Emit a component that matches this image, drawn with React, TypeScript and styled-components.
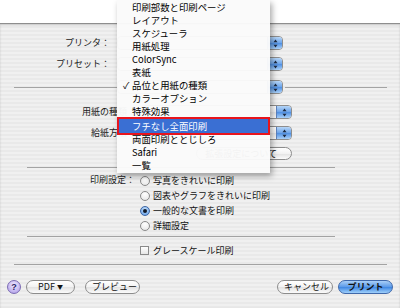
import React from 'react'
import styled, { createGlobalStyle, css } from 'styled-components'

const GlobalStyle = createGlobalStyle`
  html, body {
    margin: 0;
    padding: 0;
    background: #fff;
  }
  body {
    font-family: 'Noto Sans CJK JP', 'Noto Sans', sans-serif;
  }
`

const Screen = styled.div`
  position: relative;
  width: 400px;
  height: 308px;
  overflow: hidden;
  background: #fff;
  font-size: 9px;
  color: #111;
`

const TopGap = styled.div`
  height: 23px;
  background: #fff;
`

const Sheet = styled.div`
  height: 285px;
  box-sizing: border-box;
  border-top: 1px solid #8e8e8e;
  background: repeating-linear-gradient(to bottom, #f0f0f0 0 2px, #e9e9e9 2px 4px);
  box-shadow: inset 0 1px 2px rgba(0, 0, 0, 0.18);
  padding-top: 12px;
  display: flex;
  flex-direction: column;
`

const Body = styled.div`
  padding: 0 13px 0 14px;
`

const FormGrid = styled.div<{ $label: number; $field: number; $gap: number }>`
  display: grid;
  grid-template-columns: ${p => p.$label}px ${p => p.$field}px;
  column-gap: ${p => p.$gap}px;
  row-gap: 7px;
  align-items: center;
`

const Label = styled.div`
  text-align: right;
  line-height: 14px;
  white-space: nowrap;
  color: #1a1a1a;
`

const PopupBox = styled.div`
  display: flex;
  height: 14px;
  box-sizing: border-box;
  border: 1px solid #8d8d8d;
  border-radius: 4px;
  background: linear-gradient(#ffffff, #f1f1f1 50%, #e4e4e4 51%, #fafafa);
  overflow: hidden;
`

const PopupText = styled.span`
  flex: 1;
`

const PopupArrow = styled.span`
  width: 14px;
  display: flex;
  align-items: center;
  justify-content: center;
  border-left: 1px solid #5d82bd;
  background: linear-gradient(#b6d6f8, #6ea5ea 48%, #4f8fe2 52%, #a9d0f8);
`

// the menu hides the popup values, so only the frame and arrow are drawn
const Popup = () => (
  <PopupBox>
    <PopupText />
    <PopupArrow>
      <svg width="5" height="9" viewBox="0 0 5 9">
        <path d="M2.5 0.5 L4.5 3.3 L0.5 3.3 Z M2.5 8.5 L4.5 5.7 L0.5 5.7 Z" fill="#1d2a40" />
      </svg>
    </PopupArrow>
  </PopupBox>
)

const PaneRow = styled.div`
  margin-top: 9px;
  height: 14px;
  display: flex;
  align-items: center;
`

const Rule = styled.div<{ $width?: number; $top?: number; $grow?: boolean }>`
  height: 1px;
  background: #a3a3a3;
  ${p => p.$width && css`width: ${p.$width}px;`}
  ${p => p.$top && css`margin-top: ${p.$top}px;`}
  ${p => p.$grow && css`flex: 1;`}
`

const PaneSelect = styled.div`
  width: 166px;
  margin-right: 2px;
`

const Pane = styled.div`
  margin-top: 11px;
  padding-left: 13px;
  width: 308px;
`

const Pill = styled.button<{ $width?: number; $primary?: boolean }>`
  height: 14px;
  box-sizing: border-box;
  ${p => p.$width && css`width: ${p.$width}px;`}
  padding: 0 6px;
  border: 1px solid #8c8c8c;
  border-radius: 7px;
  background: linear-gradient(#ffffff, #f2f2f2 50%, #e2e2e2 52%, #fbfbfb);
  font-family: inherit;
  font-size: 9px;
  line-height: 12px;
  color: #111;
  white-space: nowrap;
  ${p =>
    p.$primary &&
    css`
      border-color: #3f68aa;
      background: linear-gradient(#a9cff7, #5d9be9 48%, #3f87e2 52%, #9fd0fb);
      font-weight: bold;
    `}
`

const InfoButton = styled(Pill)`
  justify-self: end;
  height: 13px;
  padding: 0 14px 0 8px;
`

const Caret = styled.span`
  font-size: 6px;
  margin-left: 2px;
  vertical-align: 1px;
`

const RadioGroup = styled.div`
  margin-top: 5px;
  display: grid;
  grid-template-columns: 108px auto;
  column-gap: 5px;
`

const RadioList = styled.div`
  display: flex;
  flex-direction: column;
`

const Choice = styled.div<{ $indent?: number; $top?: number }>`
  height: 15px;
  display: flex;
  align-items: center;
  gap: 3px;
  white-space: nowrap;
  ${p => p.$indent && css`padding-left: ${p.$indent}px;`}
  ${p => p.$top && css`margin-top: ${p.$top}px; height: 14px;`}
`

const RadioDot = styled.span<{ $on?: boolean }>`
  width: 10px;
  height: 10px;
  box-sizing: border-box;
  border-radius: 50%;
  border: 1px solid #8a8a8a;
  background: radial-gradient(circle at 50% 30%, #ffffff, #e3e3e3);
  display: flex;
  align-items: center;
  justify-content: center;
  ${p =>
    p.$on &&
    css`
      border-color: #3d66a6;
      background: radial-gradient(circle at 50% 30%, #c4e0fb, #5b98e4);
      &::after {
        content: '';
        width: 4px;
        height: 4px;
        border-radius: 50%;
        background: #101828;
      }
    `}
`

const CheckBox = styled.span`
  width: 9px;
  height: 9px;
  box-sizing: border-box;
  border: 1px solid #8a8a8a;
  background: linear-gradient(#ffffff, #e6e6e6);
  margin-right: 1px;
`

const Footer = styled.div`
  margin-top: 15px;
  height: 14px;
  padding: 0 7px;
  display: flex;
  align-items: center;
`

const HelpButton = styled.span`
  width: 14px;
  height: 14px;
  box-sizing: border-box;
  border-radius: 50%;
  border: 1px solid #7b6bb3;
  background: radial-gradient(circle at 50% 35%, #eee8ff, #ab98e6);
  display: flex;
  align-items: center;
  justify-content: center;
  font-family: 'Liberation Sans', sans-serif;
  font-weight: bold;
  font-size: 9px;
  color: #2b1b66;
`

const Spacer = styled.div`
  flex: 1;
`

const Gap = styled.span<{ $w: number }>`
  width: ${p => p.$w}px;
  flex: none;
`

const Menu = styled.div`
  position: absolute;
  left: 117px;
  top: 0;
  width: 153px;
  height: 173px;
  box-sizing: border-box;
  padding-top: 1px;
  background: rgba(250, 250, 250, 0.97);
  box-shadow: 2px 3px 6px rgba(0, 0, 0, 0.35);
  z-index: 10;
  font-size: 9.4px;
  color: #000;
`

const MenuItem = styled.div<{ $active?: boolean }>`
  height: 13px;
  line-height: 13px;
  display: flex;
  white-space: nowrap;
  ${p =>
    p.$active &&
    css`
      margin: 1px 2px 0;
      height: 14px;
      line-height: 14px;
      background: #3a6fd3;
      color: #fff;
      outline: 2px solid #e8141c;
    `}
`

const Check = styled.span<{ $active?: boolean }>`
  width: ${p => (p.$active ? 13 : 15)}px;
  padding-left: 6px;
  box-sizing: border-box;
  flex: none;
`

const menuItems = [
  '印刷部数と印刷ページ',
  'レイアウト',
  'スケジューラ',
  '用紙処理',
  'ColorSync',
  '表紙',
  '品位と用紙の種類',
  'カラーオプション',
  '特殊効果',
  'フチなし全面印刷',
  '両面印刷ととじしろ',
  'Safari',
  '一覧',
]

const App = () => {
  return (
    <Screen>
      <GlobalStyle />
      <TopGap />
      <Sheet>
        <Body>
          <FormGrid $label={96} $field={166} $gap={7}>
            <Label>プリンタ：</Label>
            <Popup />
            <Label>プリセット：</Label>
            <Popup />
          </FormGrid>
          <PaneRow>
            <Rule $width={103} />
            <PaneSelect>
              <Popup />
            </PaneSelect>
            <Rule $grow />
          </PaneRow>
          <Pane>
            <FormGrid $label={109} $field={152} $gap={4}>
              <Label>用紙の種類：</Label>
              <Popup />
              <Label>給紙方法：</Label>
              <Popup />
              <span />
              <InfoButton>拡張設定について</InfoButton>
            </FormGrid>
            <Rule $top={7} />
            <RadioGroup>
              <Label>印刷設定：</Label>
              <RadioList>
                <Choice><RadioDot />写真をきれいに印刷</Choice>
                <Choice><RadioDot />図表やグラフをきれいに印刷</Choice>
                <Choice><RadioDot $on />一般的な文書を印刷</Choice>
                <Choice><RadioDot />詳細設定</Choice>
              </RadioList>
            </RadioGroup>
            <Rule $top={3} />
            <Choice $indent={113} $top={6}>
              <CheckBox />グレースケール印刷
            </Choice>
          </Pane>
          <Rule $top={7} />
        </Body>
        <Footer>
          <HelpButton>?</HelpButton>
          <Gap $w={5} />
          <Pill $width={49}>PDF<Caret>▼</Caret></Pill>
          <Gap $w={10} />
          <Pill $width={55}>プレビュー</Pill>
          <Spacer />
          <Pill $width={56}>キャンセル</Pill>
          <Gap $w={5} />
          <Pill $width={55} $primary>プリント</Pill>
        </Footer>
      </Sheet>
      <Menu>
        {menuItems.map(item => {
          const active = item === 'フチなし全面印刷'
          return (
            <MenuItem key={item} $active={active}>
              <Check $active={active}>{item === '品位と用紙の種類' ? '✓' : ''}</Check>
              {item}
            </MenuItem>
          )
        })}
      </Menu>
    </Screen>
  )
}

export default App
